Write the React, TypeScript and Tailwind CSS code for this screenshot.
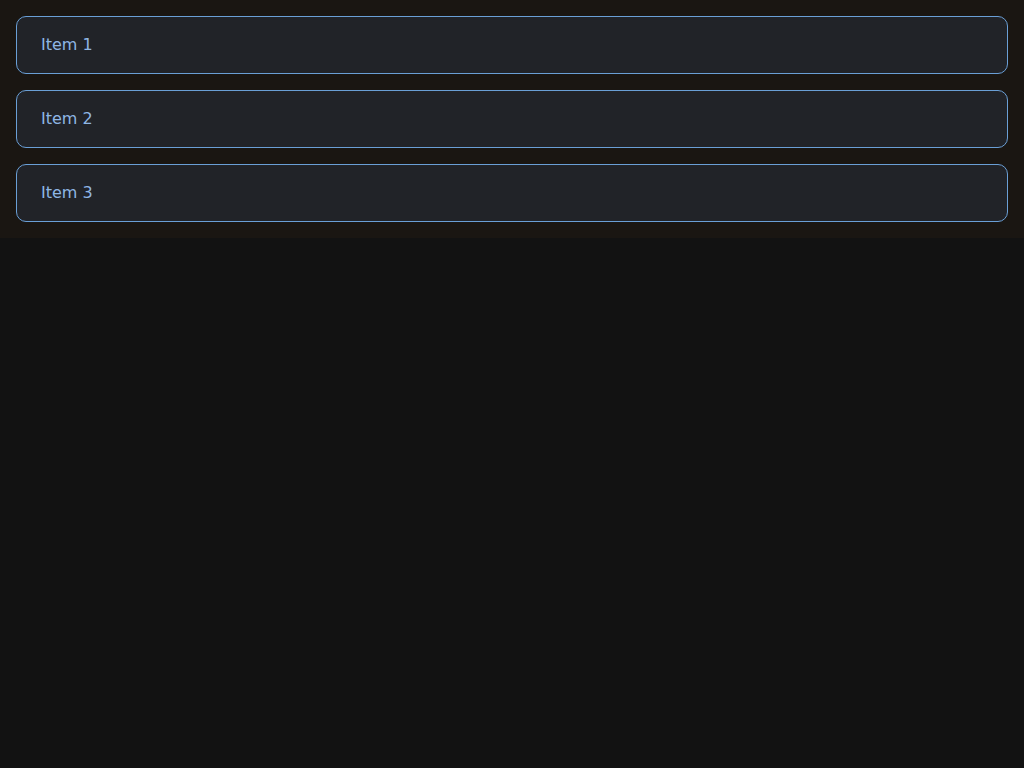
export default function App() {
  const items = ["Item 1", "Item 2", "Item 3"];
  return (
    <div className="min-h-screen bg-[#121212] font-['DejaVu_Sans',sans-serif]">
      <div className="flex flex-col gap-4 p-4 bg-[#1a1612]">
        {items.map((item) => (
          <div
            key={item}
            className="h-[58px] flex items-center px-6 rounded-[10px] border border-[#6a9fd6] bg-[#212328] text-[#8fb6e4] text-base"
          >
            {item}
          </div>
        ))}
      </div>
    </div>
  );
}
